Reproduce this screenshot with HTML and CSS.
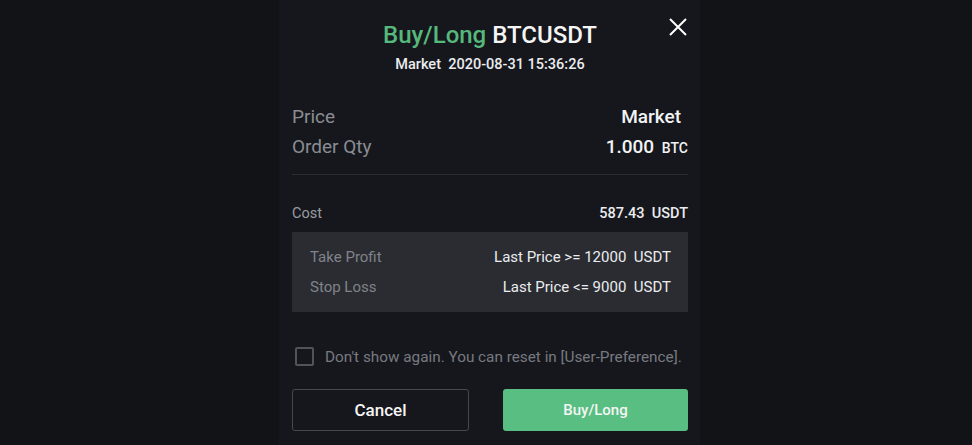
FILE: index.html
```html
<!DOCTYPE html>
<html lang="en">
<head>
    <meta charset="UTF-8">
    <meta name="viewport" content="width=device-width, initial-scale=1.0">
    <title>Confirm Order</title>
    <link rel="stylesheet" href="styles.css">
</head>
<body>
    <div class="modal">
        <div class="modal-head">
            <h1 class="title"><span class="side-buy">Buy/Long</span> BTCUSDT</h1>
            <div class="subtitle">Market&nbsp;&nbsp;2020-08-31 15:36:26</div>
            <button class="close" aria-label="Close">
                <svg width="20" height="20" viewBox="0 0 20 20">
                    <path d="M2 2 L18 18 M18 2 L2 18" stroke="#fff" stroke-width="2" fill="none"/>
                </svg>
            </button>
        </div>

        <div class="summary">
            <div class="row big">
                <span class="label">Price</span>
                <span class="value market">Market</span>
            </div>
            <div class="row big">
                <span class="label">Order Qty</span>
                <span class="value qty">1.000 <small>BTC</small></span>
            </div>
        </div>

        <div class="row cost">
            <span class="label">Cost</span>
            <span class="value">587.43&nbsp;&nbsp;USDT</span>
        </div>

        <div class="tpsl">
            <div class="row">
                <span class="label">Take Profit</span>
                <span class="value">Last Price &gt;= 12000&nbsp;&nbsp;USDT</span>
            </div>
            <div class="row">
                <span class="label">Stop Loss</span>
                <span class="value">Last Price &lt;= 9000&nbsp;&nbsp;USDT</span>
            </div>
        </div>

        <label class="remember">
            <span class="box"></span>
            Don't show again. You can reset in [User-Preference].
        </label>

        <div class="actions">
            <button class="btn btn-cancel">Cancel</button>
            <button class="btn btn-buy">Buy/Long</button>
        </div>
    </div>
</body>
</html>
```

FILE: styles.css
```css
body {
    font-family: Roboto, "Noto Sans", sans-serif;
    margin: 0;
    padding: 0;
    background-color: #121317;
    height: 445px;
    overflow: hidden;
}
.modal {
    width: 396px;
    height: 445px;
    margin-left: 279px;
    padding: 0 12px 0 13px;
    background-color: #16171c;
    color: #eaecef;
}
.modal-head {
    position: relative;
    text-align: center;
    padding-top: 19px;
    height: 83px;
}
.title {
    margin: 0;
    font-size: 24px;
    font-weight: 500;
    line-height: 32px;
    color: #f5f5f5;
}
.side-buy {
    color: #56b97c;
}
.subtitle {
    margin-top: 4px;
    font-size: 14.5px;
    font-weight: 500;
    line-height: 20px;
    color: #eaecef;
}
.close {
    position: absolute;
    top: 17px;
    right: 0;
    padding: 0;
    border: none;
    background: none;
    width: 20px;
    height: 20px;
}
.row {
    display: flex;
    justify-content: space-between;
    align-items: baseline;
}
.summary {
    padding-bottom: 12px;
    border-bottom: 1px solid #2a2c32;
}
.row.big {
    height: 30px;
    line-height: 30px;
}
.row.big .label {
    font-size: 19px;
    color: #8a8d94;
}
.row.big .value {
    font-size: 19px;
    font-weight: 500;
    color: #f2f3f5;
}
.row.big .market {
    margin-right: 7px;
}
.qty small {
    font-size: 14px;
    margin-left: 3px;
}
.cost {
    margin-top: 28px;
    height: 22px;
    line-height: 22px;
    font-size: 14.5px;
}
.cost .label {
    color: #9a9ca2;
}
.cost .value {
    font-weight: 500;
}
.tpsl {
    margin-top: 7px;
    background-color: #2a2c32;
    padding: 10px 17px 10px 18px;
}
.tpsl .row {
    height: 30px;
    align-items: center;
    font-size: 15px;
}
.tpsl .label {
    color: #80838a;
}
.tpsl .value {
    color: #eaecef;
}
.remember {
    display: flex;
    align-items: center;
    gap: 11px;
    margin-top: 35px;
    padding-left: 3px;
    font-size: 15.3px;
    white-space: nowrap;
    color: #777a81;
}
.box {
    width: 15px;
    height: 15px;
    border: 2px solid #505359;
    border-radius: 2px;
}
.actions {
    display: flex;
    justify-content: space-between;
    margin-top: 23px;
}
.btn {
    height: 42px;
    border-radius: 3px;
    font-family: inherit;
    color: #f5f5f5;
}
.btn-cancel {
    width: 177px;
    background: none;
    border: 1px solid #45484e;
    font-weight: 500;
    font-size: 17px;
}
.btn-buy {
    width: 185px;
    border: none;
    background-color: #58be81;
    font-weight: 500;
    font-size: 15px;
}
```
